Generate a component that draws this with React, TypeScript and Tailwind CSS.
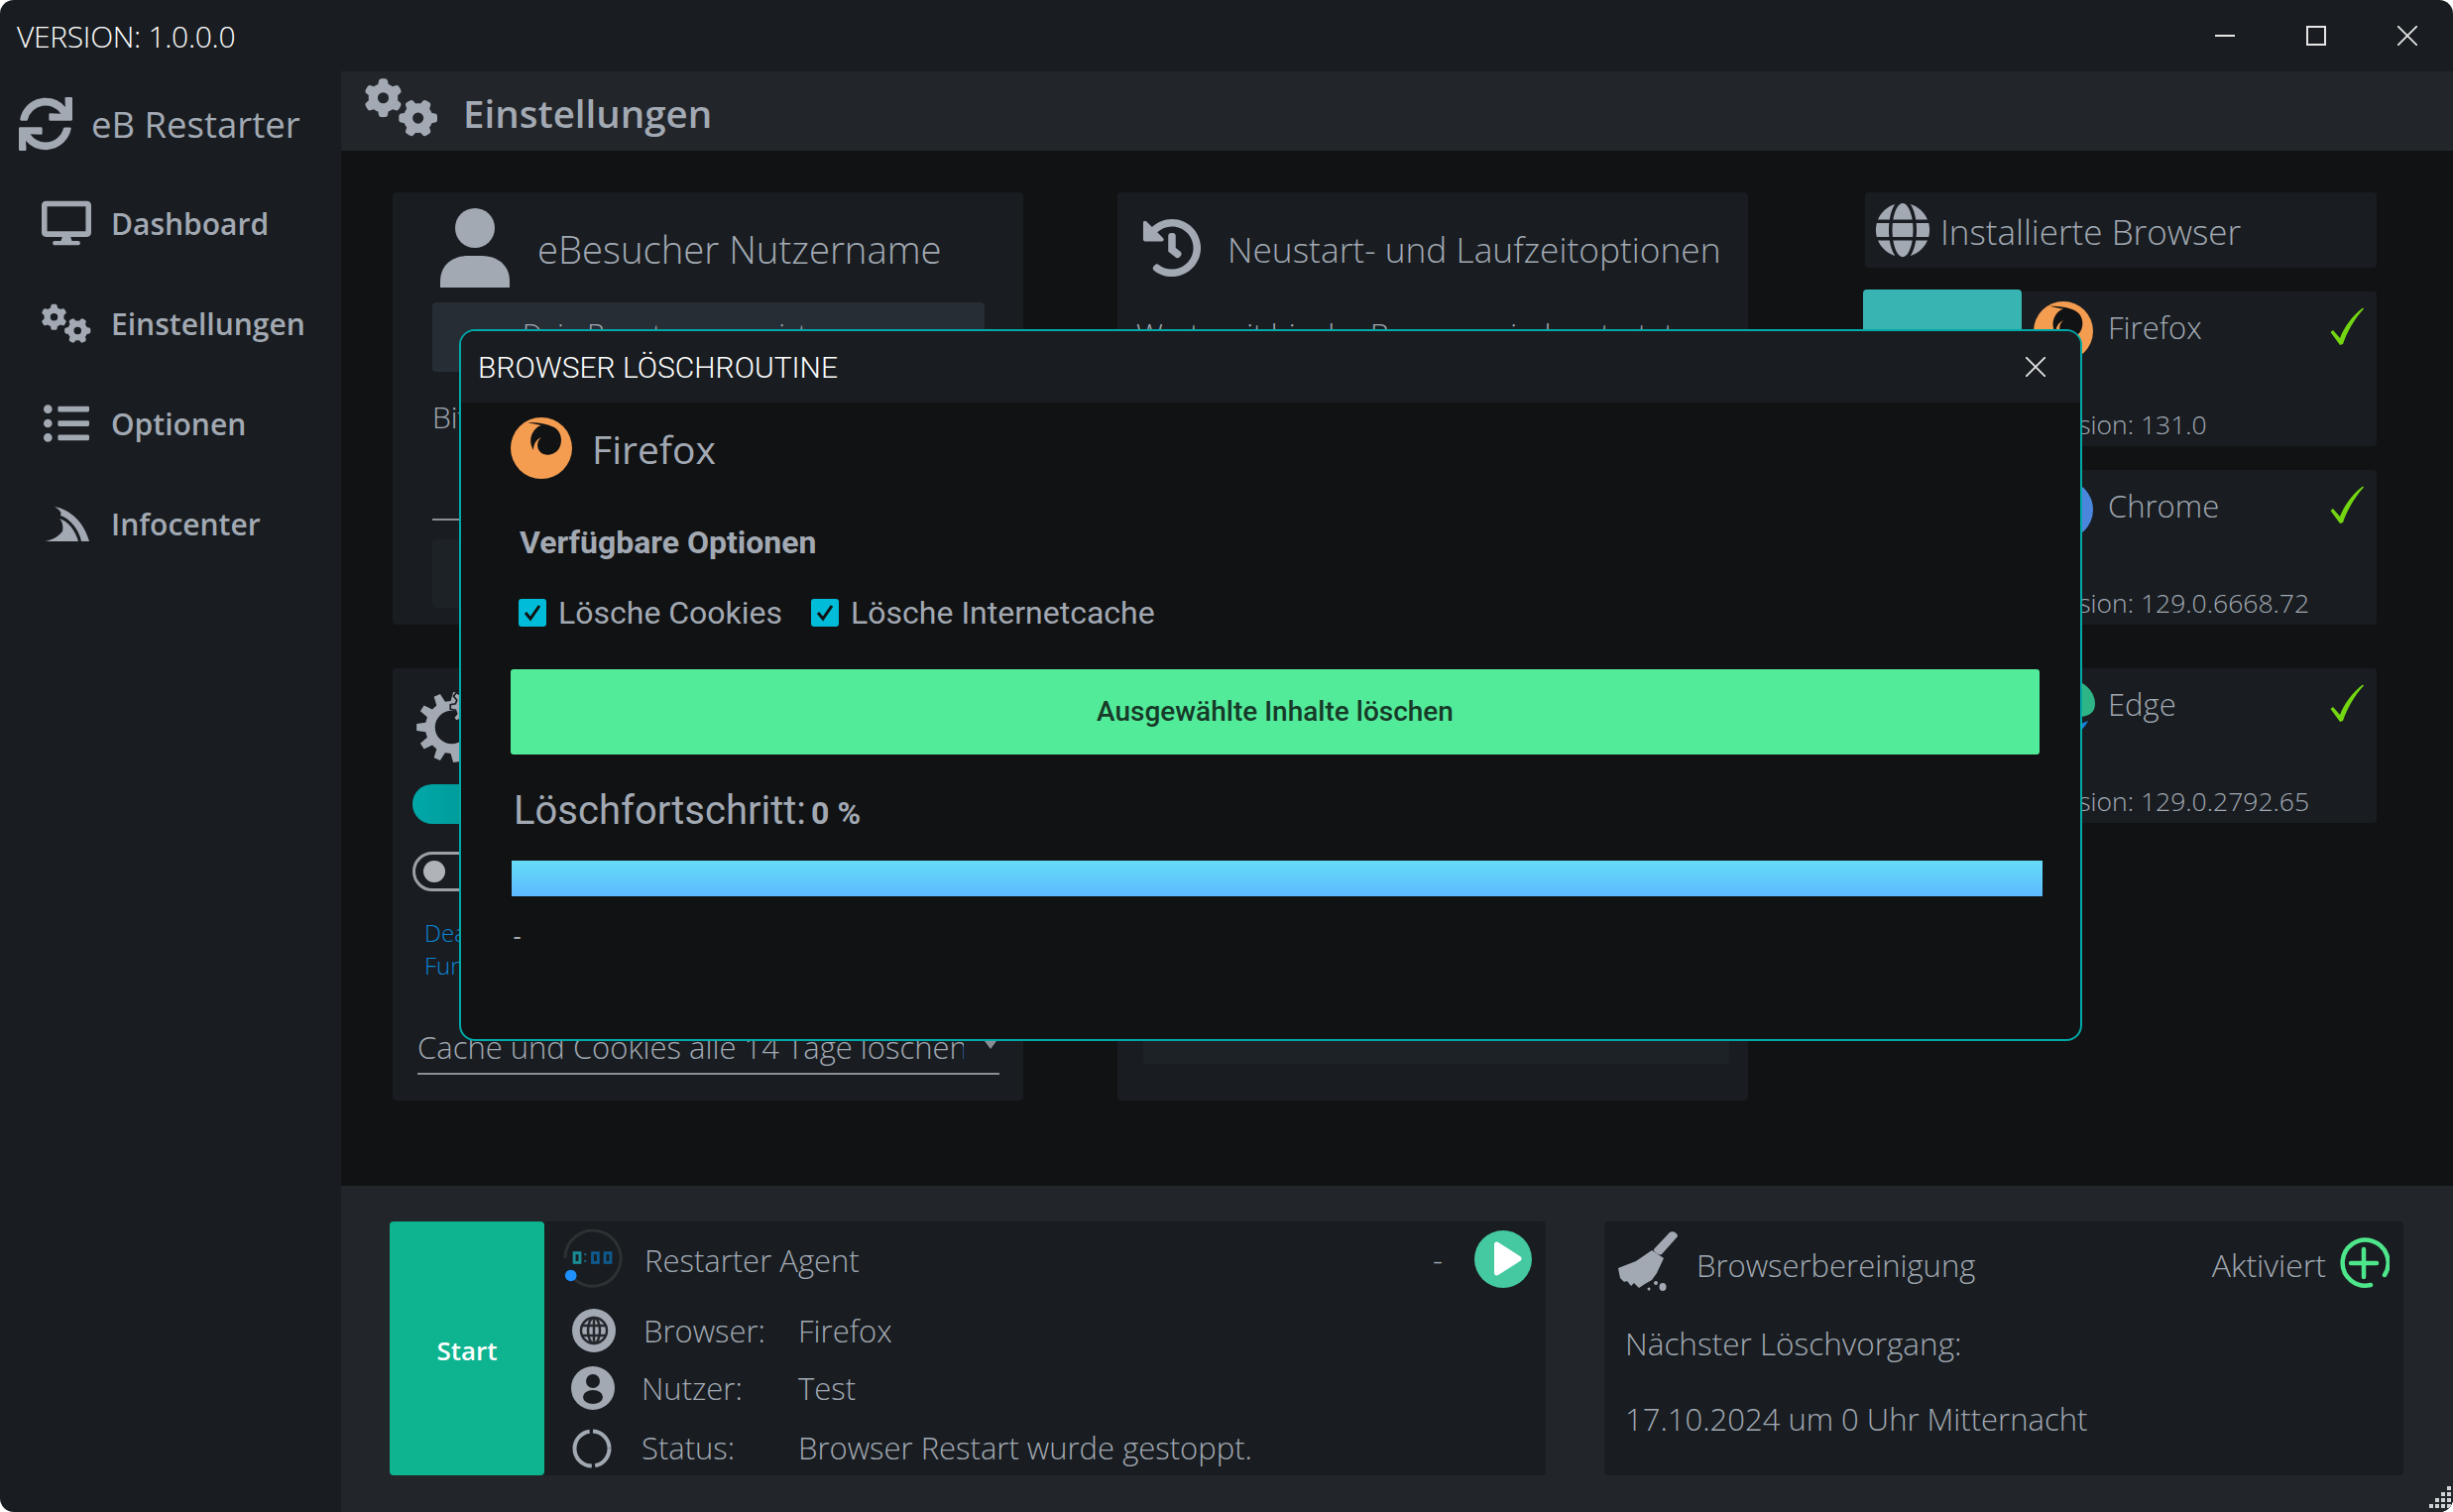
import type { ReactNode } from "react";
import { FaDesktop, FaListUl, FaHistory, FaGlobe, FaSync } from "react-icons/fa";
import { FaGears } from "react-icons/fa6";

const seg = "font-['Open_Sans','Noto_Sans',sans-serif]";
const rob = "font-['Roboto','Open_Sans',sans-serif]";

function gearPath(teeth: number, outer: number, root: number, hole: number) {
  const c = 36;
  const pts: string[] = [];
  const step = (Math.PI * 2) / teeth;
  const at = (r: number, a: number) => `${(c + r * Math.cos(a)).toFixed(2)} ${(c + r * Math.sin(a)).toFixed(2)}`;
  for (let i = 0; i < teeth; i++) {
    const a = i * step + step / 2;
    pts.push(at(root, a - step * 0.31), at(outer, a - step * 0.17), at(outer, a + step * 0.17), at(root, a + step * 0.31));
  }
  return `M${pts.join("L")}Z M${c - hole} ${c}a${hole} ${hole} 0 1 0 ${hole * 2} 0a${hole} ${hole} 0 1 0 ${-hole * 2} 0Z`;
}

function FirefoxIcon({ className }: { className?: string }) {
  return (
    <svg viewBox="0 0 62 62" className={className}>
      <circle cx="31" cy="31" r="31" fill="#f49c50" />
      <path fill="#111213" d="M17 5C26 5 36 6 44 10C51 14 53 24 49 31C45 38 35 40 30 35C26 31 26 24 31 20C26 22 23 27 23 33C20 28 19 22 22 16C24 12 27 9 31 8C26 7 21 6 17 5Z" />
      <path fill="#191d21" d="M0 0H17C10 2 4 8 2 14 1 10 0 5 0 0Z" opacity="0" />
    </svg>
  );
}

function Check() {
  return (
    <svg viewBox="0 0 34 38" className="mt-[16px] h-[38px] w-[34px] shrink-0">
      <path d="M0.5 25 L3 23 L10 31 C14 20 23 8 33 0.5 L34 1.5 C25 11 17 25 13 37 L10 38 Z" fill="#74d611" />
    </svg>
  );
}

function PersonIcon() {
  return (
    <svg viewBox="0 0 70 80" className="h-[80px] w-[70px] shrink-0">
      <ellipse cx="35" cy="20" rx="20" ry="20" fill="#a2a9b3" />
      <path d="M0 74C0 56 14 48 28 48h14c14 0 28 8 28 26v6H0z" fill="#a2a9b3" />
    </svg>
  );
}

function FinIcon() {
  return (
    <svg viewBox="0 0 45 35" className="mx-[3px] h-[35px] w-[45px]" fill="#a2a9b3">
      <path d="M10 0C26 3 40 16 45 35H37C35 24 26 12 16 9 18 5 14 3 10 0Z" />
      <path d="M15 12C24 15 31 24 34 35H0C8 34 15 29 18 25 19 20 18 15 15 12Z" />
    </svg>
  );
}

function BroomIcon() {
  return (
    <svg viewBox="0 0 60 60" className="h-[60px] w-[60px] shrink-0" fill="#a2a9b3">
      <path d="M52 1C54-1 60 1 60 5L44 23C42 25 35 21 36 18Z" />
      <path d="M34 19L46 27 39 42 34 49 27 53 21 57 16 52 13 55 9 50 6 51 2 47 0 37 18 30Z" />
      <ellipse cx="45" cy="56" rx="3.5" ry="4" />
      <circle cx="38" cy="52" r="2" />
      <circle cx="31" cy="58" r="1.5" />
    </svg>
  );
}

function BrowserCard({ name, version, mt, icon, first }: { name: string; version: string; mt: string; icon: ReactNode; first?: boolean }) {
  return (
    <div className={`relative h-[156px] w-[516px] rounded-[4px] bg-[#191d21] ${mt}`}>
      {first && <div className="absolute left-[-2px] top-[-2px] h-[60px] w-[160px] rounded-t-[4px] bg-[#38b5b3]" />}
      <div className="flex h-[72px] items-start pl-[170px] pr-[13px]">
        <div className="relative mt-[10px] w-[76px] shrink-0">{icon}</div>
        <span className="ml-[-1px] mt-[13px] flex-1 text-[31px] font-light leading-[46px] text-[#a2a9b3]">{name}</span>
        <Check />
      </div>
      <div className="mt-[44px] pl-[175px] text-[26.5px] font-light leading-[36px] text-[#a2a9b3]">{version}</div>
    </div>
  );
}

export default function App() {
  return (
    <div className={`relative flex h-[1525px] w-[2474px] flex-col overflow-hidden rounded-[14px] bg-[#191d21] ${seg}`}>
      {/* title bar */}
      <div className="flex h-[72px] shrink-0 items-center justify-between pl-[17px] pr-[36px]">
        <span className="text-[30px] font-light tracking-[-0.3px] text-white">VERSION: 1.0.0.0</span>
        <div className="flex items-center gap-[72px]">
          <svg viewBox="0 0 20 20" className="h-[20px] w-[20px]"><path d="M0 10h20" stroke="#e5e5e5" strokeWidth="2" /></svg>
          <svg viewBox="0 0 20 20" className="h-[20px] w-[20px]"><rect x="1" y="1" width="18" height="18" fill="none" stroke="#e5e5e5" strokeWidth="2" /></svg>
          <svg viewBox="0 0 20 20" className="h-[20px] w-[20px]"><path d="M0 0l20 20M20 0L0 20" stroke="#e5e5e5" strokeWidth="1.8" /></svg>
        </div>
      </div>

      <div className="flex min-h-0 flex-1">
        {/* sidebar */}
        <aside className="w-[344px] shrink-0 text-[#a2a9b3]">
          <div className="flex h-[54px] items-center pl-[19px] pt-[52px]">
            <FaSync className="h-[54px] w-[54px] shrink-0" />
            <span className="ml-[19px] whitespace-nowrap text-[36.5px] font-normal">eB Restarter</span>
          </div>
          <nav className="mt-[67px] flex flex-col gap-[37px] pl-[42px] text-[30px] font-semibold">
            <div className="flex h-[64px] items-center gap-[20px]"><FaDesktop className="h-[50px] w-[50px]" /><span>Dashboard</span></div>
            <div className="flex h-[64px] items-center gap-[20px]"><FaGears className="h-[40px] w-[50px]" /><span>Einstellungen</span></div>
            <div className="flex h-[64px] items-center gap-[20px]"><FaListUl className="h-[46px] w-[50px]" /><span>Optionen</span></div>
            <div className="flex h-[64px] items-center gap-[20px]"><FinIcon /><span className="ml-[-1px]">Infocenter</span></div>
          </nav>
        </aside>

        {/* main */}
        <main className="flex min-w-0 flex-1 flex-col bg-[#111213]">
          <header className="flex h-[80px] shrink-0 items-center bg-[#22252a] pl-[24px] text-[#a2a9b3]">
            <FaGears className="mb-[8px] h-[60px] w-[74px]" />
            <span className="ml-[25px] pt-[5px] text-[38.5px] font-semibold">Einstellungen</span>
          </header>

          <div className="flex flex-1 gap-[95px] pl-[52px] pt-[42px] text-[#a2a9b3]">
            <div className="flex w-[636px] flex-col gap-[44px]">
              {/* user card */}
              <section className="h-[436px] rounded-[4px] bg-[#191d21] pl-[40px] pr-[39px]">
                <div className="flex h-[111px] items-end pb-[15px] pl-[8px]">
                  <PersonIcon />
                  <span className="ml-[28px] pb-[10px] text-[38.3px] font-light">eBesucher Nutzername</span>
                </div>
                <div className="h-[70px] rounded-[4px] bg-[#262d35] pl-[91px] pt-[13px] text-[28px] font-light leading-[36px]">Dein Benutzername ist</div>
                <div className="mt-[26px] text-[30px] font-light leading-[40px]">Bitte Nutzername eingeben</div>
                <div className="mt-[82px] h-[2px] bg-[#8a8f96]" />
                <div className="mt-[19px] h-[69px] rounded-[4px] bg-[#1d2226]" />
              </section>
              {/* cleaning card */}
              <section className="h-[436px] rounded-[4px] bg-[#191d21] pl-[20px] pr-[24px]">
                <div className="flex h-[71px] pl-[4px] pt-[24px] box-content">
                  <svg viewBox="0 0 72 72" className="h-[71px] w-[71px] shrink-0"><path d={gearPath(11, 36, 27, 17)} fill="#a2a9b3" fillRule="evenodd" /></svg>
                  <svg viewBox="-2 -2 76 76" className="-ml-[38px] -mt-[6px] h-[42px] w-[42px] shrink-0"><path d={gearPath(9, 36, 27, 10)} fill="#a2a9b3" fillRule="evenodd" stroke="#191d21" strokeWidth="3" /></svg>
                </div>
                <div className="mt-[22px] h-[40px] w-[100px] rounded-full bg-gradient-to-r from-[#00a8a8] to-[#008f8f]" />
                <div className="mt-[28px] flex h-[40px] w-[100px] items-center rounded-full border-[3px] border-[#9ca0a6] pl-[8px]">
                  <div className="h-[22px] w-[22px] rounded-full bg-[#b0b3b8]" />
                </div>
                <div className="mt-[25px] pl-[12px] text-[24px] font-light leading-[33px] text-[#0a84d6]">Deaktiviert<br />Funktion</div>
                <div className="ml-[5px] mt-[44px] flex h-[50px] items-start justify-between border-b-[2px] border-[#8a8f96] pr-[3px] text-[31px] font-light leading-[44px]">
                  <span className="w-[551px] overflow-hidden whitespace-nowrap">Cache und Cookies alle 14 Tage löschen</span>
                  <svg viewBox="0 0 12 8" className="mt-[16px] h-[8px] w-[12px]"><path d="M0 0h12L6 8z" fill="#8a8f96" /></svg>
                </div>
              </section>
            </div>

            {/* restart card */}
            <section className="h-[916px] w-[636px] rounded-[4px] bg-[#191d21] pl-[19px] pr-[18px]">
              <div className="flex h-[111px] items-end pb-[25px] pl-[6px]">
                <FaHistory className="h-[60px] w-[60px] shrink-0" />
                <span className="ml-[26px] whitespace-nowrap pb-[2px] text-[35.3px] font-light">Neustart- und Laufzeitoptionen</span>
              </div>
              <div className="mt-[11px] whitespace-nowrap text-[30px] font-light leading-[42px]">Wartezeit bis der Browser wieder startet</div>
              <div className="ml-[7px] mt-[655px] h-[60px] w-[591px] rounded-[4px] bg-[#1d2226]" />
            </section>

            {/* browsers */}
            <div className="ml-[23px] w-[516px]">
              <div className="flex h-[76px] items-center rounded-[4px] bg-[#191d21] pl-[10px]">
                <FaGlobe className="h-[56px] w-[56px]" />
                <span className="ml-[10px] pt-[4px] text-[35px] font-light">Installierte Browser</span>
              </div>
              <BrowserCard first mt="mt-[24px]" name="Firefox" version="Version: 131.0" icon={<FirefoxIcon className="h-[60px] w-[60px]" />} />
              <BrowserCard mt="mt-[24px]" name="Chrome" version="Version: 129.0.6668.72" icon={<div className="h-[60px] w-[60px] rounded-full bg-[#4a86dc]" />} />
              <BrowserCard mt="mt-[44px]" name="Edge" version="Version: 129.0.2792.65" icon={
                <svg viewBox="0 0 62 62" className="h-[62px] w-[62px]">
                  <path d="M31 0C48 0 62 12 62 26c0 8-6 13-16 13H20C20 20 24 6 31 0z" fill="#2fb585" />
                  <path d="M20 39c10 8 24 10 35 4-4 8-14 19-28 19-10 0-12-12-7-23z" fill="#1583e0" />
                </svg>
              } />
            </div>
          </div>

          {/* bottom */}
          <div className="flex h-[329px] shrink-0 gap-[59px] bg-[#22252a] pl-[49px] pt-[36px] text-[#a2a9b3]">
            <div className="flex h-[256px] w-[1166px] rounded-[4px] bg-[#191d21]">
              <button className="flex w-[156px] shrink-0 items-center justify-center rounded-[4px] bg-[#0db48f] pt-[4px] text-[26px] font-semibold text-white">Start</button>
              <div className="min-w-0 flex-1 pl-[19px] text-[31px] font-light">
                <div className="flex h-[76px] items-center">
                  <svg viewBox="0 0 62 62" className="h-[60px] w-[60px] shrink-0">
                    <path d="M2 30A29 29 0 1 1 12 52" fill="none" stroke="#2e3134" strokeWidth="3" />
                    <circle cx="8" cy="48" r="6" fill="#1e90ff" />
                    <rect x="10" y="23" width="9" height="13" fill="#1a8c96" /><rect x="13" y="26" width="3" height="7" fill="#191d21" />
                    <rect x="22" y="25" width="2" height="2" fill="#1a6f8c" /><rect x="22" y="32" width="2" height="2" fill="#1a6f8c" />
                    <rect x="29" y="23" width="9" height="13" fill="#0f5a8c" /><rect x="32" y="26" width="3" height="7" fill="#191d21" />
                    <rect x="42" y="23" width="9" height="13" fill="#0f5a8c" /><rect x="45" y="26" width="3" height="7" fill="#191d21" />
                  </svg>
                  <span className="ml-[22px] flex-1 pt-[2px]">Restarter Agent</span>
                  <span className="mr-[32px]">-</span>
                  <svg viewBox="0 0 58 58" className="mr-[14px] h-[58px] w-[58px]"><circle cx="29" cy="29" r="29" fill="#45c9a0" /><path d="M20 14c0-2 2-3 4-2l22 14c2 1 2 4 0 5L24 45c-2 1-4 0-4-2z" fill="#fff" /></svg>
                </div>
                <div className="flex h-[60px] items-center pt-[8px]">
                  <svg viewBox="0 0 44 44" className="ml-[9px] h-[44px] w-[44px] shrink-0"><circle cx="22" cy="22" r="22" fill="#a2a9b3" /><circle cx="22" cy="22" r="13" fill="none" stroke="#25282c" strokeWidth="2.5" /><ellipse cx="22" cy="22" rx="6" ry="13" fill="none" stroke="#25282c" strokeWidth="2.5" /><path d="M10 17h24M10 27h24M22 9v26" stroke="#25282c" strokeWidth="2.5" /></svg>
                  <span className="ml-[28px] w-[156px]">Browser:</span><span>Firefox</span>
                </div>
                <div className="mt-[2px] flex h-[60px] items-center">
                  <svg viewBox="0 0 44 44" className="ml-[8px] h-[44px] w-[44px] shrink-0"><circle cx="22" cy="22" r="22" fill="#a2a9b3" /><circle cx="22" cy="15" r="7" fill="#191d21" /><ellipse cx="22" cy="31" rx="10" ry="7" fill="#191d21" /></svg>
                  <span className="ml-[27px] w-[158px]">Nutzer:</span><span>Test</span>
                </div>
                <div className="flex h-[60px] items-center pt-[1px]">
                  <svg viewBox="0 0 40 40" className="ml-[9px] h-[40px] w-[40px] shrink-0"><circle cx="20" cy="20" r="17.5" fill="none" stroke="#a2a9b3" strokeWidth="4" strokeDasharray="24 3.5 52 3.5 26 1" /></svg>
                  <span className="ml-[30px] w-[158px]">Status:</span><span>Browser Restart wurde gestoppt.</span>
                </div>
              </div>
            </div>
            <div className="h-[256px] w-[806px] rounded-[4px] bg-[#191d21] px-[14px] pt-[10px] text-[31px] font-light">
              <div className="flex h-[60px] items-center">
                <BroomIcon />
                <span className="ml-[19px] flex-1 pt-[8px]">Browserbereinigung</span>
                <span className="pt-[8px] text-[32px]">Aktiviert</span>
                <svg viewBox="0 0 52 52" className="ml-[12px] mt-[4px] h-[52px] w-[52px]"><path d="M47 38A23 23 0 1 0 33 48" fill="none" stroke="#4ee68a" strokeWidth="4.5" strokeLinecap="round" /><path d="M26 12v28M13 26h26" stroke="#4ee68a" strokeWidth="4.5" strokeLinecap="round" /></svg>
              </div>
              <div className="ml-[7px] mt-[29px] text-[31.5px]">Nächster Löschvorgang:</div>
              <div className="ml-[7px] mt-[30px]">17.10.2024 um 0 Uhr Mitternacht</div>
            </div>
          </div>
        </main>
      </div>

      {/* grip */}
      <svg viewBox="0 0 24 24" className="absolute bottom-[2px] right-[2px] h-[24px] w-[24px]" fill="#d0d3d6">
        <rect x="20" y="0" width="4" height="4" /><rect x="14" y="6" width="4" height="4" /><rect x="20" y="6" width="4" height="4" />
        <rect x="8" y="12" width="4" height="4" /><rect x="14" y="12" width="4" height="4" /><rect x="20" y="12" width="4" height="4" />
        <rect x="2" y="18" width="4" height="4" /><rect x="8" y="18" width="4" height="4" /><rect x="14" y="18" width="4" height="4" /><rect x="20" y="18" width="4" height="4" />
      </svg>

      {/* dialog */}
      <div className={`absolute left-[463px] top-[332px] flex h-[718px] w-[1637px] flex-col overflow-hidden rounded-[16px] border-2 border-[#00a9a9] bg-[#111213] text-[#a2a9b3] ${rob}`}>
        <div className="flex h-[72px] shrink-0 items-center justify-between bg-[#191d21] pl-[17px] pr-[35px]">
          <span className="text-[30px] font-light text-white">BROWSER LÖSCHROUTINE</span>
          <svg viewBox="0 0 20 20" className="h-[20px] w-[20px]"><path d="M0 0l20 20M20 0L0 20" stroke="#e5e5e5" strokeWidth="1.8" /></svg>
        </div>
        <div className="flex flex-1 flex-col pl-[50px]">
          <div className="mt-[15px] flex items-center">
            <FirefoxIcon className="h-[62px] w-[62px]" />
            <span className={`ml-[20px] pt-[2px] text-[39px] font-normal ${seg}`}>Firefox</span>
          </div>
          <div className="ml-[9px] mt-[45px] text-[32px] font-bold leading-[38px]">Verfügbare Optionen</div>
          <div className="ml-[8px] mt-[33px] flex items-center text-[32px] leading-[38px]">
            <span className="flex h-[28px] w-[28px] items-center justify-center rounded-[3px] bg-[#00bcd8]"><svg viewBox="0 0 24 24" className="h-[24px] w-[24px]"><path d="M5 12l5 6 9-13" fill="none" stroke="#111" strokeWidth="3" /></svg></span>
            <span className="ml-[12px]">Lösche Cookies</span>
            <span className="ml-[29px] flex h-[28px] w-[28px] items-center justify-center rounded-[3px] bg-[#00bcd8]"><svg viewBox="0 0 24 24" className="h-[24px] w-[24px]"><path d="M5 12l5 6 9-13" fill="none" stroke="#111" strokeWidth="3" /></svg></span>
            <span className="ml-[12px]">Lösche Internetcache</span>
          </div>
          <button className="mt-[38px] flex h-[86px] w-[1542px] items-center justify-center rounded-[3px] bg-[#52eb9a] text-[28px] font-medium text-[#173a28]">Ausgewählte Inhalte löschen</button>
          <div className="ml-[3px] mt-[31px] flex items-baseline leading-[52px]">
            <span className="text-[40px]">Löschfortschritt:</span>
            <span className="ml-[5px] text-[32px] font-bold">0 %</span>
          </div>
          <div className="ml-[1px] mt-[22px] h-[36px] w-[1544px] bg-gradient-to-b from-[#66dcf6] to-[#5db8ff]" />
          <div className="ml-[3px] mt-[22px] text-[26px]">-</div>
        </div>
      </div>
    </div>
  );
}
